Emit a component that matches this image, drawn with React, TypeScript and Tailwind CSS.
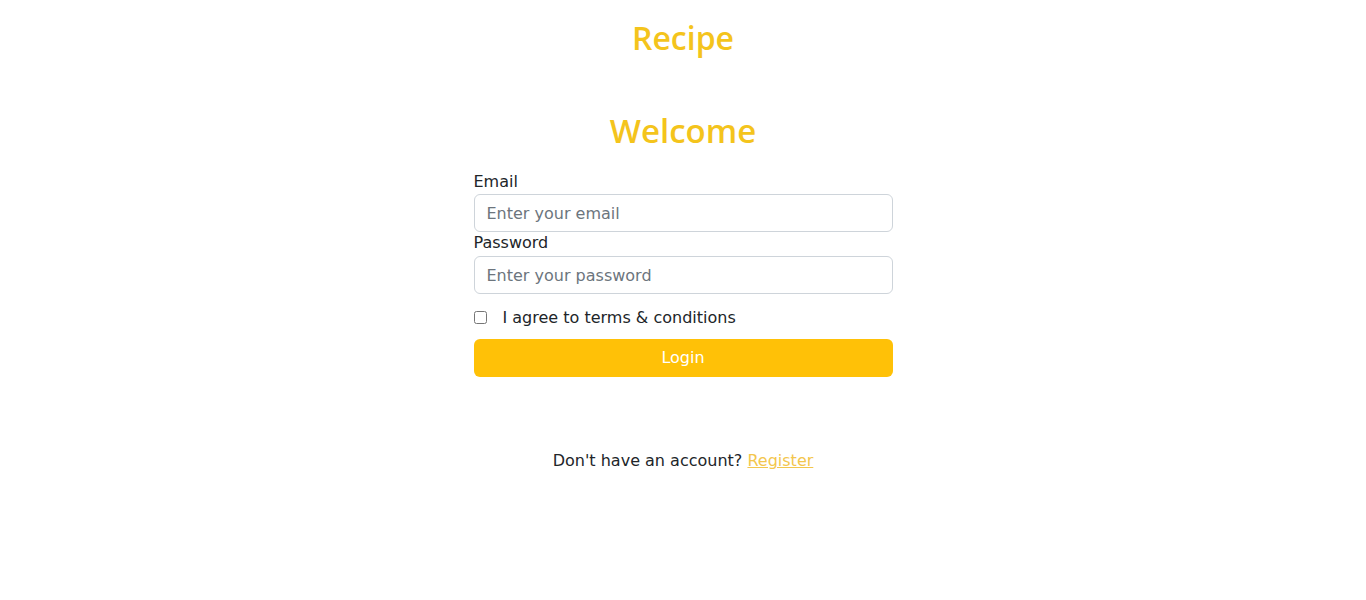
export default function App() {
  const heading = { fontFamily: '"Open Sans", "Noto Sans", sans-serif' };

  return (
    <div
      className="min-h-screen bg-white text-[#1f2937]"
      style={{ fontFamily: '"DejaVu Sans", "Noto Sans", sans-serif' }}
    >
      <header className="flex justify-center pt-[17px]">
        <h1 className="text-[32px] leading-[42px] font-semibold text-[#f4c41c]" style={heading}>
          Recipe
        </h1>
      </header>

      <main className="mx-auto flex w-[419px] flex-col pt-[50px]">
        <h2 className="text-center text-[33px] leading-[44px] font-semibold text-[#f4c41c]" style={heading}>
          Welcome
        </h2>

        <form className="mt-[19px] flex flex-col" onSubmit={(e) => e.preventDefault()}>
          <label htmlFor="email" className="-translate-y-px text-[16px] leading-[22px] text-[#212529]">
            Email
          </label>
          <input
            id="email"
            type="email"
            placeholder="Enter your email"
            className="h-[38px] w-full rounded-md border border-[#ced4da] px-3 text-[16px] text-[#212529] placeholder:text-[#6c757d] outline-none"
          />
          <label htmlFor="password" className="mt-px mb-px -translate-y-px text-[16px] leading-[22px] text-[#212529]">
            Password
          </label>
          <input
            id="password"
            type="password"
            placeholder="Enter your password"
            className="h-[38px] w-full rounded-md border border-[#ced4da] px-3 text-[16px] text-[#212529] placeholder:text-[#6c757d] outline-none"
          />

          <div className="mt-[12px] flex h-[22px] items-center">
            <input id="terms" type="checkbox" className="h-[13px] w-[13px]" />
            <label htmlFor="terms" className="ml-[16px] translate-y-px text-[16px] leading-[22px] text-[#212529]">
              I agree to terms &amp; conditions
            </label>
          </div>

          <button
            type="submit"
            className="mt-[11px] h-[38px] w-full rounded-md bg-[#ffc107] text-[16px] font-medium text-white"
          >
            Login
          </button>
        </form>

        <p className="mt-[73px] text-center text-[16px] leading-[22px] text-[#212529]">
          Don't have an account?{" "}
          <a href="#" className="text-[#f3c64d] underline">
            Register
          </a>
        </p>
      </main>
    </div>
  );
}
